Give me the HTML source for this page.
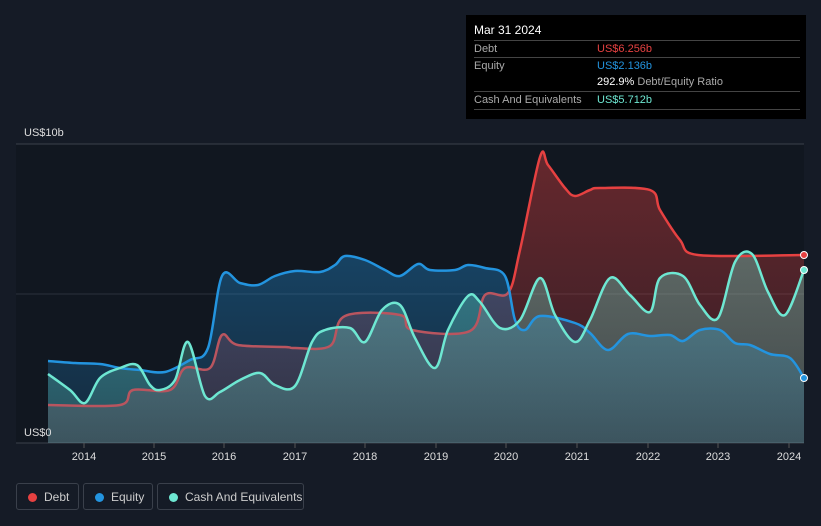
<!DOCTYPE html>
<html><head><style>
body{margin:0;background:#151b26;width:821px;height:526px;overflow:hidden;font-family:"Liberation Sans",sans-serif;position:relative}
.tip{position:absolute;left:466px;top:15px;width:340px;height:104px;background:#000;color:#fff;font-size:11px}
.tip .r{position:absolute;left:8px;right:6px;border-top:1px solid #444;height:17px;line-height:17px;color:#aaa}
.tip .v{position:absolute;left:123px}
.leg{position:absolute;top:483px;height:27px;border:1px solid #3a404b;border-radius:3px;color:#ccc;font-size:12px;line-height:27px;box-sizing:border-box}
.leg i{position:absolute;left:11px;top:9px;width:9px;height:9px;border-radius:50%}
.leg span{position:absolute;left:27px}
</style></head><body>
<svg width="821" height="526" style="position:absolute;left:0;top:0">
<defs>
<linearGradient id="gd" x1="0" y1="0" x2="0" y2="1"><stop offset="0" stop-color="#e64141" stop-opacity=".4"/><stop offset="1" stop-color="#e64141" stop-opacity=".15"/></linearGradient>
<linearGradient id="ge" x1="0" y1="0" x2="0" y2="1"><stop offset="0" stop-color="#2394df" stop-opacity=".35"/><stop offset="1" stop-color="#2394df" stop-opacity=".15"/></linearGradient>
<linearGradient id="gc" x1="0" y1="0" x2="0" y2="1"><stop offset="0" stop-color="#6ee7d2" stop-opacity=".35"/><stop offset="1" stop-color="#6ee7d2" stop-opacity=".2"/></linearGradient>
<clipPath id="past"><rect x="0" y="0" width="508" height="526"/></clipPath>
<clipPath id="fut"><rect x="508" y="0" width="320" height="526"/></clipPath>
</defs>
<rect x="16" y="144" width="788" height="299" fill="#111720"/>
<line x1="16" y1="144" x2="804" y2="144" stroke="#3a404b"/>
<line x1="16" y1="294" x2="804" y2="294" stroke="#2c323c"/>
<line x1="16" y1="443" x2="804" y2="443" stroke="#3a404b"/>
<g id="g"></g>
<circle cx="804" cy="255" r="3.5" fill="#e64141" stroke="#fff"/>
<circle cx="804" cy="378" r="3.5" fill="#2394df" stroke="#fff"/>
<circle cx="804" cy="270" r="3.5" fill="#6ee7d2" stroke="#fff"/>
<g stroke="#555" ><line x1="84" y1="443" x2="84" y2="448"/><line x1="154" y1="443" x2="154" y2="448"/><line x1="224" y1="443" x2="224" y2="448"/><line x1="295" y1="443" x2="295" y2="448"/><line x1="365" y1="443" x2="365" y2="448"/><line x1="436" y1="443" x2="436" y2="448"/><line x1="506" y1="443" x2="506" y2="448"/><line x1="577" y1="443" x2="577" y2="448"/><line x1="648" y1="443" x2="648" y2="448"/><line x1="718" y1="443" x2="718" y2="448"/><line x1="789" y1="443" x2="789" y2="448"/></g>
<g fill="#ddd" font-size="11" text-anchor="middle" font-family="Liberation Sans,sans-serif">
<text x="84" y="460">2014</text><text x="154" y="460">2015</text><text x="224" y="460">2016</text><text x="295" y="460">2017</text><text x="365" y="460">2018</text><text x="436" y="460">2019</text><text x="506" y="460">2020</text><text x="577" y="460">2021</text><text x="648" y="460">2022</text><text x="718" y="460">2023</text><text x="789" y="460">2024</text>
</g>
<text x="24" y="136" fill="#ddd" font-size="11" font-family="Liberation Sans,sans-serif">US$10b</text>
<text x="24" y="436" fill="#ddd" font-size="11" font-family="Liberation Sans,sans-serif">US$0</text>
</svg>
<script>
var D=[[48,405],[120,405],[133,390],[170,390],[185,368],[210,368],[222,335],[238,345],[285,347],[295,348],[330,346],[345,316],[400,315],[412,330],[470,331],[485,295],[508,293],[520,250],[540,157],[548,165],[565,188],[575,196],[590,190],[600,188],[650,190],[660,210],[680,240],[698,255],[804,255]];
var E=[[48,361],[75,363],[100,364],[120,368],[140,370],[165,372],[190,360],[208,348],[222,276],[240,283],[258,285],[275,276],[295,271],[320,272],[335,265],[345,256],[365,260],[385,270],[400,276],[418,264],[430,270],[455,270],[468,265],[485,268],[505,276],[515,320],[525,330],[540,316],[575,323],[590,333],[608,350],[628,334],[650,336],[670,335],[683,341],[700,330],[720,330],[735,343],[750,345],[770,354],[790,358],[804,378]];
var C=[[48,374],[70,390],[85,403],[100,378],[120,368],[137,365],[150,385],[160,390],[175,380],[188,342],[205,396],[220,392],[240,380],[260,373],[275,385],[295,386],[312,342],[325,330],[350,328],[365,342],[382,310],[400,305],[415,338],[435,368],[448,330],[468,296],[480,302],[500,328],[520,320],[540,278],[555,315],[575,342],[590,320],[610,278],[630,295],[650,312],[660,278],[683,276],[700,305],[718,318],[735,262],[752,254],[768,292],[785,315],[804,270]];
function sm(p){var d="M"+p[0][0]+","+p[0][1];for(var i=0;i<p.length-1;i++){var a=p[i-1]||p[i],b=p[i],c=p[i+1],e=p[i+2]||c,t=6;
var c1x=b[0]+(c[0]-a[0])/t,c1y=b[1]+(c[1]-a[1])/t,c2x=c[0]-(e[0]-b[0])/t,c2y=c[1]-(e[1]-b[1])/t;
c1x=Math.min(Math.max(c1x,b[0]),c[0]);c2x=Math.min(Math.max(c2x,b[0]),c[0]);
d+=" C"+c1x.toFixed(1)+","+c1y.toFixed(1)+" "+c2x.toFixed(1)+","+c2y.toFixed(1)+" "+c[0]+","+c[1];}return d;}
var s="";
[[D,"gd","#e64141","#b9555f"],[E,"ge","#2394df","#2394df"],[C,"gc","#6ee7d2","#6ee7d2"]].forEach(function(x){var d=sm(x[0]);
s+='<path fill="url(#'+x[1]+')" d="'+d+' L804,443 L48,443 Z"/>';
x.push(d);});
[[D,"#e64141","#b9555f"],[E,"#2394df","#2394df"],[C,"#6ee7d2","#6ee7d2"]].forEach(function(x){var d=sm(x[0]);
s+='<path clip-path="url(#past)" fill="none" stroke="'+x[2]+'" stroke-width="2.5" d="'+d+'"/>';
s+='<path clip-path="url(#fut)" fill="none" stroke="'+x[1]+'" stroke-width="2.5" d="'+d+'"/>';});
document.getElementById("g").innerHTML=s;
</script>
<div class="tip">
<div style="position:absolute;left:8px;top:8px;font-size:12px">Mar 31 2024</div>
<div class="r" style="top:25px">Debt<span class="v" style="color:#e64141">US$6.256b</span></div>
<div class="r" style="top:42px">Equity<span class="v" style="color:#2394df">US$2.136b</span></div>
<div class="r" style="top:59px;border:0"><span class="v"><b style="color:#fff;font-weight:normal">292.9%</b> Debt/Equity Ratio</span></div>
<div class="r" style="top:76px">Cash And Equivalents<span class="v" style="color:#6ee7d2">US$5.712b</span></div>
<div class="r" style="top:94px;height:0"></div>
</div>
<div class="leg" style="left:16px;width:63px"><i style="background:#e64141"></i><span>Debt</span></div>
<div class="leg" style="left:83px;width:70px"><i style="background:#2394df"></i><span>Equity</span></div>
<div class="leg" style="left:157px;width:147px"><i style="background:#6ee7d2"></i><span>Cash And Equivalents</span></div>
</body></html>
